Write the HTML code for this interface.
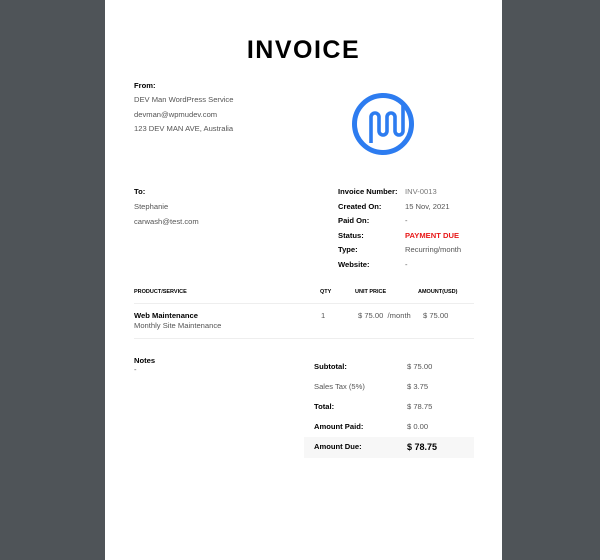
<!DOCTYPE html><html><head><style>
body{margin:0;width:600px;height:560px;background:#4f5458;font-family:"Liberation Sans",sans-serif;overflow:hidden;position:relative}
.pg{position:absolute;left:105px;top:0;width:397px;height:560px;background:#fff}
.a{position:absolute;font-size:7.6px;color:#555;white-space:nowrap}
.b{font-weight:bold;color:#000}
h1{position:absolute;left:0;width:397px;top:36px;margin:0;text-align:center;font-size:25px;letter-spacing:1.5px;font-weight:bold;color:#000}
.hr{position:absolute;left:29px;width:340px;height:1px;background:#eee}
</style></head><body><div class="pg">
<h1>INVOICE</h1>
<div class="a b" style="left:29px;top:81px">From:</div>
<div class="a" style="left:29px;top:95px">DEV Man WordPress Service</div>
<div class="a" style="left:29px;top:110px">devman@wpmudev.com</div>
<div class="a" style="left:29px;top:124px">123 DEV MAN AVE, Australia</div>
<svg style="position:absolute;left:241px;top:90px" width="70" height="70" viewBox="0 0 70 70"><circle cx="37" cy="34" r="28.5" fill="none" stroke="#2d7cf0" stroke-width="5"/><path d="M25 53V27a4 4 0 0 1 8 0V41a4 4 0 0 0 8 0V27a4 4 0 0 1 8 0V41a4 4 0 0 0 8 0V13" fill="none" stroke="#2d7cf0" stroke-width="3.6"/></svg>
<div class="a b" style="left:29px;top:187px">To:</div>
<div class="a" style="left:29px;top:202px">Stephanie</div>
<div class="a" style="left:29px;top:217px">carwash@test.com</div>
<div class="a b" style="left:233px;top:187px">Invoice Number:</div><div class="a" style="left:300px;top:187px;color:#777">INV-0013</div>
<div class="a b" style="left:233px;top:202px">Created On:</div><div class="a" style="left:300px;top:202px">15 Nov, 2021</div>
<div class="a b" style="left:233px;top:216px">Paid On:</div><div class="a" style="left:300px;top:216px">-</div>
<div class="a b" style="left:233px;top:231px">Status:</div><div class="a" style="left:300px;top:231px;color:#e81818;font-weight:bold">PAYMENT DUE</div>
<div class="a b" style="left:233px;top:245px">Type:</div><div class="a" style="left:300px;top:245px">Recurring/month</div>
<div class="a b" style="left:233px;top:260px">Website:</div><div class="a" style="left:300px;top:260px">-</div>
<div class="a b" style="left:29px;top:289px;font-size:5.5px">PRODUCT/SERVICE</div>
<div class="a b" style="left:215px;top:289px;font-size:5.5px">QTY</div>
<div class="a b" style="left:250px;top:289px;font-size:5.5px">UNIT PRICE</div>
<div class="a b" style="left:313px;top:289px;font-size:5.5px">AMOUNT(USD)</div>
<div class="hr" style="top:303px"></div>
<div class="a b" style="left:29px;top:311px">Web Maintenance</div>
<div class="a" style="left:29px;top:321px">Monthly Site Maintenance</div>
<div class="a" style="left:216px;top:311px">1</div>
<div class="a" style="left:253px;top:311px">$ 75.00 &nbsp;/month</div>
<div class="a" style="left:318px;top:311px">$ 75.00</div>
<div class="hr" style="top:338px"></div>
<div class="a b" style="left:29px;top:356px">Notes</div>
<div class="a" style="left:29px;top:365px">-</div>
<div style="position:absolute;left:199px;top:437px;width:170px;height:21px;background:#f7f7f7"></div>
<div class="a b" style="left:209px;top:362px">Subtotal:</div><div class="a" style="left:302px;top:362px">$ 75.00</div>
<div class="a" style="left:209px;top:382px">Sales Tax (5%)</div><div class="a" style="left:302px;top:382px">$ 3.75</div>
<div class="a b" style="left:209px;top:402px">Total:</div><div class="a" style="left:302px;top:402px">$ 78.75</div>
<div class="a b" style="left:209px;top:422px">Amount Paid:</div><div class="a" style="left:302px;top:422px">$ 0.00</div>
<div class="a b" style="left:209px;top:442px">Amount Due:</div><div class="a b" style="left:302px;top:442px;font-size:9px">$ 78.75</div>
</div></body></html>
